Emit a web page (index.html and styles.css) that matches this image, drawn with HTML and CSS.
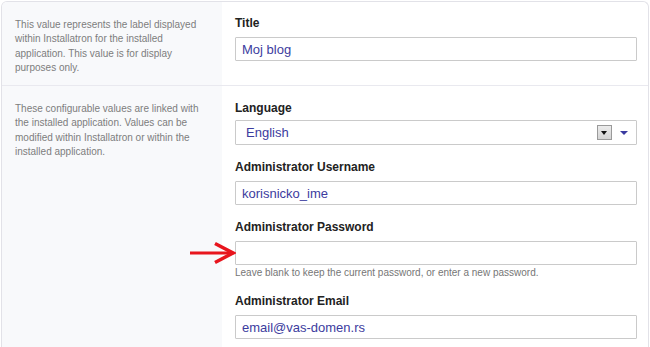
FILE: index.html
```html
<!DOCTYPE html>
<html lang="en">
<head>
    <meta charset="UTF-8">
    <meta name="viewport" content="width=device-width, initial-scale=1.0">
    <title>Installatron - Edit Installation</title>
    <link rel="stylesheet" href="styles.css">
</head>
<body>
    <div class="panel">
        <div class="row">
            <div class="row-help">
                This value represents the label displayed within Installatron for the installed application. This value is for display purposes only.
            </div>
            <div class="row-fields">
                <div class="field">
                    <label class="field-label">Title</label>
                    <input class="text-input" type="text" value="Moj blog">
                </div>
            </div>
        </div>

        <div class="row">
            <div class="row-help">
                These configurable values are linked with the installed application. Values can be modified within Installatron or within the installed application.
            </div>
            <div class="row-fields">
                <div class="field">
                    <label class="field-label field-label-tight">Language</label>
                    <div class="select-box">
                        <span class="select-value">English</span>
                        <span class="select-btn"></span>
                        <span class="select-caret"></span>
                    </div>
                </div>

                <div class="field">
                    <label class="field-label">Administrator Username</label>
                    <input class="text-input" type="text" value="korisnicko_ime">
                </div>

                <div class="field field-marked">
                    <label class="field-label">Administrator Password</label>
                    <div class="input-wrap">
                        <svg class="pointer-arrow" width="46" height="24" viewBox="0 0 46 24">
                            <path d="M0 12 H41" stroke="#e8151d" stroke-width="3" fill="none"/>
                            <path d="M25 2.5 L43 12 L25 21.5" stroke="#e8151d" stroke-width="3.5" fill="none"/>
                        </svg>
                        <input class="text-input" type="password" value="">
                    </div>
                    <div class="field-hint">Leave blank to keep the current password, or enter a new password.</div>
                </div>

                <div class="field">
                    <label class="field-label">Administrator Email</label>
                    <input class="text-input" type="text" value="email@vas-domen.rs">
                </div>
            </div>
        </div>
    </div>
</body>
</html>
```

FILE: styles.css
```css
* {
    box-sizing: border-box;
    margin: 0;
    padding: 0;
}

body {
    font-family: "Liberation Sans", Arial, sans-serif;
    background: #fff;
    padding: 1px 1px 0 1px;
    overflow: hidden;
}

.panel {
    border: 1px solid #e2e2e8;
    border-bottom: none;
    border-radius: 6px 6px 0 0;
    overflow: hidden;
}

.row {
    display: grid;
    grid-template-columns: 220px 1fr;
    border-bottom: 1px solid #e9e9ef;
}

.row-help {
    background: #f8f9fb;
    padding: 16px 20px 8px 13px;
    font-size: 10px;
    line-height: 14.3px;
    color: #7d7d7d;
}

.row-fields {
    padding: 13px 11px 24px 13px;
}

.row + .row .row-fields {
    padding-top: 14px;
}

.field {
    margin-bottom: 14px;
}

.field:last-child {
    margin-bottom: 0;
}

.field-label {
    display: block;
    font-size: 12px;
    font-weight: bold;
    line-height: 16px;
    color: #222;
    margin-bottom: 6px;
}

.field-label-tight {
    margin-bottom: 4px;
}

.text-input {
    display: block;
    width: 100%;
    height: 24px;
    border: 1px solid #cacaca;
    border-radius: 1px;
    padding: 0 6px;
    font-family: "Liberation Sans", Arial, sans-serif;
    font-size: 13px;
    color: #3c3c9e;
    background: #fff;
    outline: none;
}

.select-box {
    display: flex;
    align-items: center;
    height: 25px;
    border: 1px solid #cacaca;
    border-radius: 1px;
    padding: 0 8px 0 10px;
    font-size: 13px;
    color: #3c3c9e;
}

.select-value {
    flex-grow: 1;
}

.select-btn {
    position: relative;
    width: 15px;
    height: 15px;
    border: 1px solid #9a9a9a;
    background: linear-gradient(#ececec, #d4d4d4);
    margin-right: 8px;
}

.select-btn::after {
    content: "";
    position: absolute;
    left: 3px;
    top: 5px;
    border-left: 3.5px solid transparent;
    border-right: 3.5px solid transparent;
    border-top: 4px solid #111;
}

.select-caret {
    width: 0;
    height: 0;
    border-left: 4px solid transparent;
    border-right: 4px solid transparent;
    border-top: 4px solid #3a3aa0;
}

.input-wrap {
    position: relative;
}

.pointer-arrow {
    position: absolute;
    left: -45px;
    top: 0;
}

.field-hint {
    font-size: 10px;
    line-height: 13px;
    margin-top: 1px;
    color: #767676;
}
```
